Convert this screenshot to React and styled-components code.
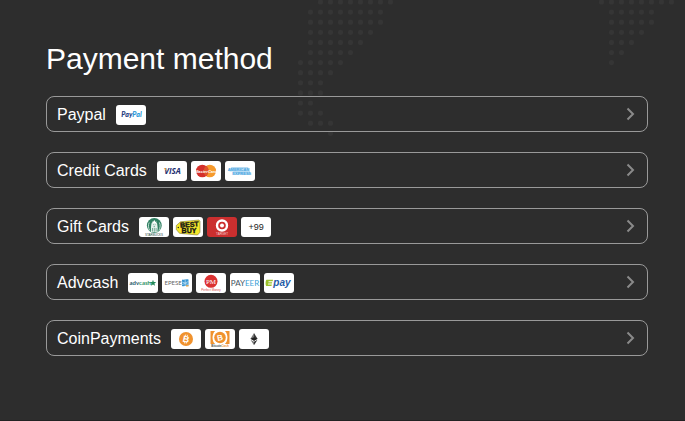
import React from 'react';
import styled, { createGlobalStyle } from 'styled-components';

const GlobalStyle = createGlobalStyle`
  * {
    box-sizing: border-box;
  }

  body {
    margin: 0;
    background-color: #2d2d2d;
    font-family: "Liberation Sans", Helvetica, Arial, sans-serif;
  }
`;

const Page = styled.main`
  position: relative;
  min-height: 100vh;
  padding: 40px 37px 64px 46px;
  border-bottom: 1px solid #222;
  overflow: hidden;
`;

const MapDots = styled.svg`
  position: absolute;
  top: 0;
  left: 0;
  fill: #353535;
`;

const Title = styled.h1`
  position: relative;
  margin: 0 0 18px;
  color: #fff;
  font-size: 30px;
  font-weight: 400;
  line-height: 38px;
`;

const MethodList = styled.ul`
  position: relative;
  display: flex;
  flex-direction: column;
  gap: 20px;
  margin: 0;
  padding: 0;
  list-style: none;
`;

const MethodButton = styled.button`
  display: flex;
  align-items: center;
  gap: 10px;
  width: 100%;
  padding: 8px 12px 6px 10px;
  border: 1px solid #999;
  border-radius: 8px;
  background: transparent;
  color: #fff;
  font-family: inherit;
  font-size: 16px;
  line-height: 20px;
  text-align: left;
  cursor: pointer;

  &:hover {
    border-color: #fff;
  }
`;

const MethodName = styled.span`
  white-space: nowrap;
`;

const Logos = styled.span`
  display: flex;
  gap: 4px;
`;

const Badge = styled.span`
  display: flex;
  align-items: center;
  justify-content: center;
  width: 30px;
  height: 20px;
  border-radius: 3px;
  background-color: ${({ $color }) => $color || '#fff'};
  color: #222;
  font-size: 9px;
  overflow: hidden;
`;

const Chevron = styled.svg`
  margin-left: auto;
  margin-bottom: 2px;
  fill: none;
  stroke: #8a8a8a;
  stroke-width: 2;
`;

const Logo = ({ title, color, children }) => (
  <Badge $color={color}>
    <svg width="30" height="20" viewBox="0 0 30 20" role="img" aria-label={title}>
      {children}
    </svg>
  </Badge>
);

const Paypal = () => (
  <Logo title="PayPal">
    <text x="15.5" y="12" textAnchor="middle" fontFamily="Lato, sans-serif" fontSize="7" fontWeight="900" fontStyle="italic" fill="#253b80">
      Pay<tspan fill="#2797d8">Pal</tspan>
    </text>
  </Logo>
);

const Visa = () => (
  <Logo title="Visa">
    <text x="15.5" y="13" textAnchor="middle" fontFamily="Open Sans, sans-serif" fontSize="8" fontWeight="700" fontStyle="italic" fill="#1d2f70">VISA</text>
    <path d="M6.6 7.2h2.2l1 2.8z" fill="#f0a53a" />
  </Logo>
);

const Mastercard = () => (
  <Logo title="MasterCard">
    <circle cx="18.8" cy="10" r="6.3" fill="#f69a2c" />
    <circle cx="11.3" cy="10" r="6.3" fill="#d4302b" />
    <path d="M15 5a6.3 6.3 0 0 1 0 10 6.3 6.3 0 0 1 0-10z" fill="#e0552b" />
    <text x="15" y="11.5" textAnchor="middle" fontSize="4" fontWeight="700" fontStyle="italic" fill="#fff">MasterCard</text>
  </Logo>
);

const Amex = () => (
  <Logo title="American Express">
    <path d="M4.5 8.5L6.5 6h16l2 1.5-1 3h-19zM8 10h17v4H9z" fill="#b7dcf4" />
    <g fontSize="4" fontWeight="700" fill="#4ba6e0" textAnchor="middle">
      <text x="13.5" y="9.8">AMERICAN</text>
      <text x="16.8" y="13.7">EXPRESS</text>
    </g>
  </Logo>
);

const Starbucks = () => (
  <Logo title="Starbucks">
    <circle cx="15.3" cy="8.5" r="7.4" fill="#2f8062" />
    <path d="M11.8 15.2c.8-2-.2-3 .2-5.200.3-1.500.2-3 .8-4.200h5c.6 1.200.5 2.700.8 4.200.4 2.200-.6 3.200.2 5.200z" fill="#e4f0eb" />
    <path d="M13 4.300l1 .6 1.300-1.900 1.300 1.900 1-.6-.5 1.800h-3.600z" fill="#fff" />
    <path d="M14.1 7.600h.7M15.8 7.600h.7M14.6 9.400h1.400M13.5 11v3.500M15.3 10.8v4M17.1 11v3.500" fill="none" stroke="#2f8062" strokeWidth=".6" />
    <path d="M10.2 5.500c-1.300 2.500-.8 6 .6 8M20.4 5.500c1.300 2.500.8 6-.6 8" fill="none" stroke="#d4e7df" strokeWidth=".9" />
    <text x="15" y="19.3" textAnchor="middle" fontSize="3" fill="#24463b">STARBUCKS</text>
  </Logo>
);

const BestBuy = () => (
  <Logo title="Best Buy">
    <path d="M7.5 4.800L26 3l1 1.500v10.800L24.5 18 6.5 16.300 3.3 12.500V8.500z" fill="#f5e72b" stroke="#6b651c" strokeWidth=".5" />
    <circle cx="5.3" cy="10.5" r=".7" fill="#222" />
    <g fontSize="7" fontWeight="700" fill="#151515" stroke="#151515" strokeWidth=".4" textAnchor="middle">
      <text x="16.5" y="10" transform="rotate(-4 16 10)">BEST</text>
      <text x="16" y="15.8">BUY</text>
    </g>
  </Logo>
);

const Target = () => (
  <Logo title="Target" color="#cb2f2f">
    <circle cx="15" cy="8.5" r="5" fill="none" stroke="#fff" strokeWidth="2.4" />
    <circle cx="15" cy="8.5" r="2" fill="#fff" />
    <text x="15" y="17.8" textAnchor="middle" fontSize="3" fill="#f6d0d0">TARGET</text>
  </Logo>
);

const Advcash = () => (
  <Logo title="Advcash">
    <text x="1.5" y="12" fontFamily="Lato, sans-serif" fontSize="6" fontWeight="700" fill="#26566a">
      adv<tspan fill="#2f9467">cash</tspan>
    </text>
    <path d="M25 6.800l.8 2.100 2.500.2-1.900 1.400.7 2.300-2.100-1.300-2.200 1.300.7-2.300-1.900-1.400 2.600-.2z" fill="#238a5a" />
  </Logo>
);

const Epese = () => (
  <Logo title="Epese">
    <text x="2.5" y="12.3" fontFamily="Lato, sans-serif" fontSize="6" fill="#666">EPESE</text>
    <path d="M20 6.500c2 1 4-1 6.500 0v6.500c-2.500-1-4.500 1-6.500 0z" fill="#3795d2" />
    <path d="M20 9l3 1 3.500-1.500M20 11.500l3-1 3.500 1M23.2 7v6" fill="none" stroke="#c5e4f4" strokeWidth=".7" />
    <path d="M24 12.200h2.500v1.200H24z" fill="#e8a243" />
  </Logo>
);

const PerfectMoney = () => (
  <Logo title="Perfect Money">
    <circle cx="15" cy="8.3" r="6.5" fill="#db3131" />
    <text x="15" y="10.5" textAnchor="middle" fontFamily="Liberation Serif, serif" fontSize="7" fill="#fff">PM</text>
    <text x="15" y="17.5" textAnchor="middle" fontSize="3" fill="#d94a4a">Perfect Money</text>
  </Logo>
);

const Payeer = () => (
  <Logo title="Payeer">
    <text x="15" y="13" textAnchor="middle" fontFamily="Lato, sans-serif" fontSize="8" fill="#44545f">
      PAY<tspan fill="#3c9fd8">EER</tspan>
    </text>
  </Logo>
);

const Epay = () => (
  <Logo title="Epay">
    <path d="M2.5 6.800h6.500l-.3 1.500H4.600l-.2 1h3.800L7.900 10.600H4.200l-.2 1h3.800l-.3 1.500H2.300c-1-.8-.9-5.300.2-6.300z" fill="#9cc22b" />
    <text x="9.3" y="13" fontSize="10" fontWeight="700" fontStyle="italic" fill="#1f5ca8">pay</text>
  </Logo>
);

const Bitcoin = () => (
  <Logo title="Bitcoin">
    <circle cx="15" cy="10" r="7" fill="#f0922e" />
    <text x="15" y="13.2" textAnchor="middle" fontSize="9" fontWeight="700" fill="#fff" transform="rotate(12 15 10)">B</text>
    <path d="M14.8 5.500l-.3 1.600M16.5 5.800l-.3 1.600M13.8 12.800l-.3 1.600M15.5 13l-.3 1.600" stroke="#fff" strokeWidth=".8" />
  </Logo>
);

const BitcoinCash = () => (
  <Logo title="Bitcoin Cash">
    <path d="M5.5 2h4.600c-3.400 3-3.400 10 0 13H5.500zM24.5 2h-4.600c3.400 3 3.400 10 0 13h4.600z" fill="#f0922e" />
    <circle cx="15" cy="8.5" r="5.8" fill="#f0922e" />
    <text x="15" y="11.4" textAnchor="middle" fontSize="8" fontWeight="700" fill="#fff" transform="rotate(-12 15 8.5)">B</text>
    <text x="15" y="18" textAnchor="middle" fontSize="3" fontWeight="700" fill="#4d4d4d">
      Bitcoin<tspan fill="#f0922e">Cash</tspan>
    </text>
  </Logo>
);

const Ethereum = () => (
  <Logo title="Ethereum">
    <path d="M15 4v7.800l-3.500-2z" fill="#777" />
    <path d="M15 4v7.800l3.500-2z" fill="#3a3a3a" />
    <path d="M11.5 9.800L15 8.200l3.500 1.600-3.500 2z" fill="#222" />
    <path d="M11.5 10.700l3.500 2v3.500z" fill="#777" />
    <path d="M18.5 10.700l-3.500 2v3.500z" fill="#333" />
  </Logo>
);

const methods = [
  { name: 'Paypal', logos: [Paypal] },
  { name: 'Credit Cards', logos: [Visa, Mastercard, Amex] },
  { name: 'Gift Cards', logos: [Starbucks, BestBuy, Target], more: '+99' },
  { name: 'Advcash', logos: [Advcash, Epese, PerfectMoney, Payeer, Epay] },
  { name: 'CoinPayments', logos: [Bitcoin, BitcoinCash, Ethereum] },
];

// [x of the first dot, number of dots] for each line of the world map
const leftDots = [
  [320, 8], [310, 8], [310, 8], [310, 7], [310, 6], [310, 5], [300, 5],
  [300, 4], [300, 3], [300, 3], [300, 2], [300, 3], [310, 3], [330, 1],
];
const rightDots = [[601, 8], [611, 5], [611, 5], [611, 4], [611, 3], [611, 2], [611, 1]];

const renderDots = (lines) =>
  lines.map(([start, count], line) =>
    Array.from({ length: count }, (_, i) => (
      <circle key={`${start}-${line}-${i}`} cx={start + 0.5 + i * 10} cy={2 + line * 10.1} r="2.6" />
    ))
  );

const App = () => (
  <>
    <GlobalStyle />
    <Page>
      <MapDots width="685" height="140" aria-hidden="true">
        {renderDots(leftDots)}
        {renderDots(rightDots)}
      </MapDots>
      <Title>Payment method</Title>
      <MethodList>
        {methods.map(({ name, logos, more }) => (
          <li key={name}>
            <MethodButton type="button">
              <MethodName>{name}</MethodName>
              <Logos>
                {logos.map((Item, i) => <Item key={i} />)}
                {more && <Badge>{more}</Badge>}
              </Logos>
              <Chevron width="9" height="14" viewBox="0 0 9 14" aria-hidden="true">
                <path d="M1.5 1.500L7 7l-5.500 5.500" />
              </Chevron>
            </MethodButton>
          </li>
        ))}
      </MethodList>
    </Page>
  </>
);

export default App;
